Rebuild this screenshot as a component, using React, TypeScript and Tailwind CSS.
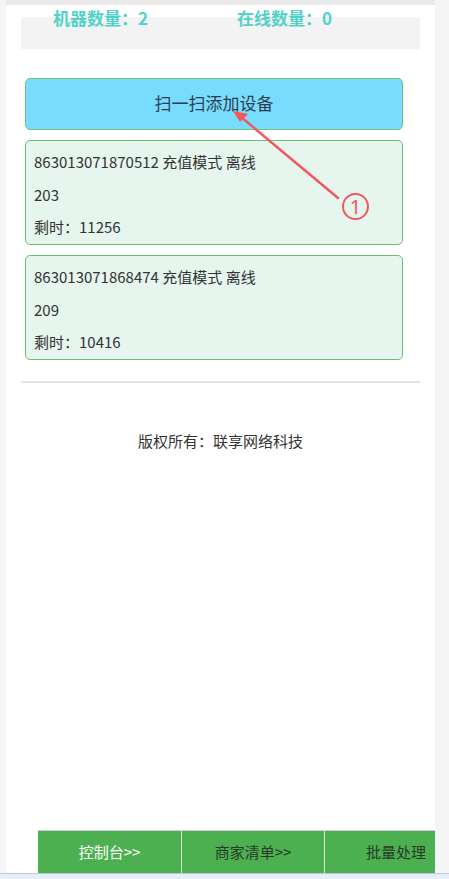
import React from 'react';

const devices = [
  { id: '863013071870512', mode: '充值模式', status: '离线', no: '203', left: '11256' },
  { id: '863013071868474', mode: '充值模式', status: '离线', no: '209', left: '10416' },
];

const navItems = [
  { label: '控制台>>', light: true },
  { label: '商家清单>>', light: false },
  { label: '批量处理', light: false },
];

const App: React.FC = () => {
  return (
    <div
      className="relative w-[449px] h-[879px] bg-[#f5f5f5] overflow-hidden flex flex-col"
      style={{ fontFamily: '"Noto Sans CJK SC", "Noto Sans", sans-serif' }}
    >
      <div className="flex flex-1 min-h-0">
        <div className="ml-[6px] w-[429px] bg-white flex flex-col overflow-hidden">
          <div className="h-[5px] bg-[#e9e9e9]" />

          {/* stats */}
          <div className="mx-[15px] mt-[12px] h-[32px] bg-[#f3f3f3]">
            <div className="-mt-[10px] flex text-[17px] leading-[22px] font-bold text-[#52d1c9]">
              <span className="pl-[32px] w-[216px]">机器数量：2</span>
              <span>在线数量：0</span>
            </div>
          </div>

          <div className="mx-[19px] mt-[29px] flex flex-col gap-[10px]">
            <button className="h-[52px] w-[378px] pb-[3px] rounded-[5px] border border-[#74c477] bg-[#77dcfd] text-[17px] text-[#2c3e50]">
              扫一扫添加设备
            </button>

            {devices.map((d) => (
              <div
                key={d.id}
                className="h-[105px] w-[378px] rounded-[5px] border border-[#6cbf6e] bg-[#e6f5ee] px-[8px] pt-[10px] text-[15px] leading-[22px] text-[#333]"
              >
                <p>
                  {d.id} {d.mode} {d.status}
                </p>
                <p className="mt-[10.5px]">{d.no}</p>
                <p className="mt-[10px]">剩时：{d.left}</p>
              </div>
            ))}
          </div>

          <div className="mx-[15px] mt-[21px] h-[2px] bg-[#e3e3e3]" />

          <p className="mt-[47px] text-center text-[15px] leading-[22px] text-[#333]">
            版权所有：联享网络科技
          </p>

          <div className="mt-auto ml-[32px] flex h-[43px] border-t border-[#cfcfcf]">
            {navItems.map((n, i) => (
              <div
                key={n.label}
                className={`w-[143px] shrink-0 flex items-center justify-center bg-[#4caf50] text-[15px] ${
                  n.light ? 'text-white' : 'text-[#2a3a2a]'
                } ${i > 0 ? 'border-l border-[#d8e8d8]' : ''}`}
              >
                {n.label}
              </div>
            ))}
          </div>
        </div>
      </div>
      <div className="h-[6px] border-t border-[#b9c9d9] bg-[#e6eff8]" />

      {/* annotation */}
      <svg className="absolute left-0 top-0" width="449" height="879" viewBox="0 0 449 879">
        <line x1="338" y1="198" x2="241" y2="117" stroke="#f4575b" strokeWidth="2.4" strokeLinecap="round" />
        <polygon points="233,111 248,114 240,122" fill="#f4575b" />
        <circle cx="355.5" cy="206.5" r="12.5" fill="none" stroke="#f4575b" strokeWidth="2" />
        <text x="355.5" y="213.5" textAnchor="middle" fontSize="20" fill="#f4575b" fontFamily="Noto Sans, sans-serif">
          1
        </text>
      </svg>
    </div>
  );
};

export default App;
